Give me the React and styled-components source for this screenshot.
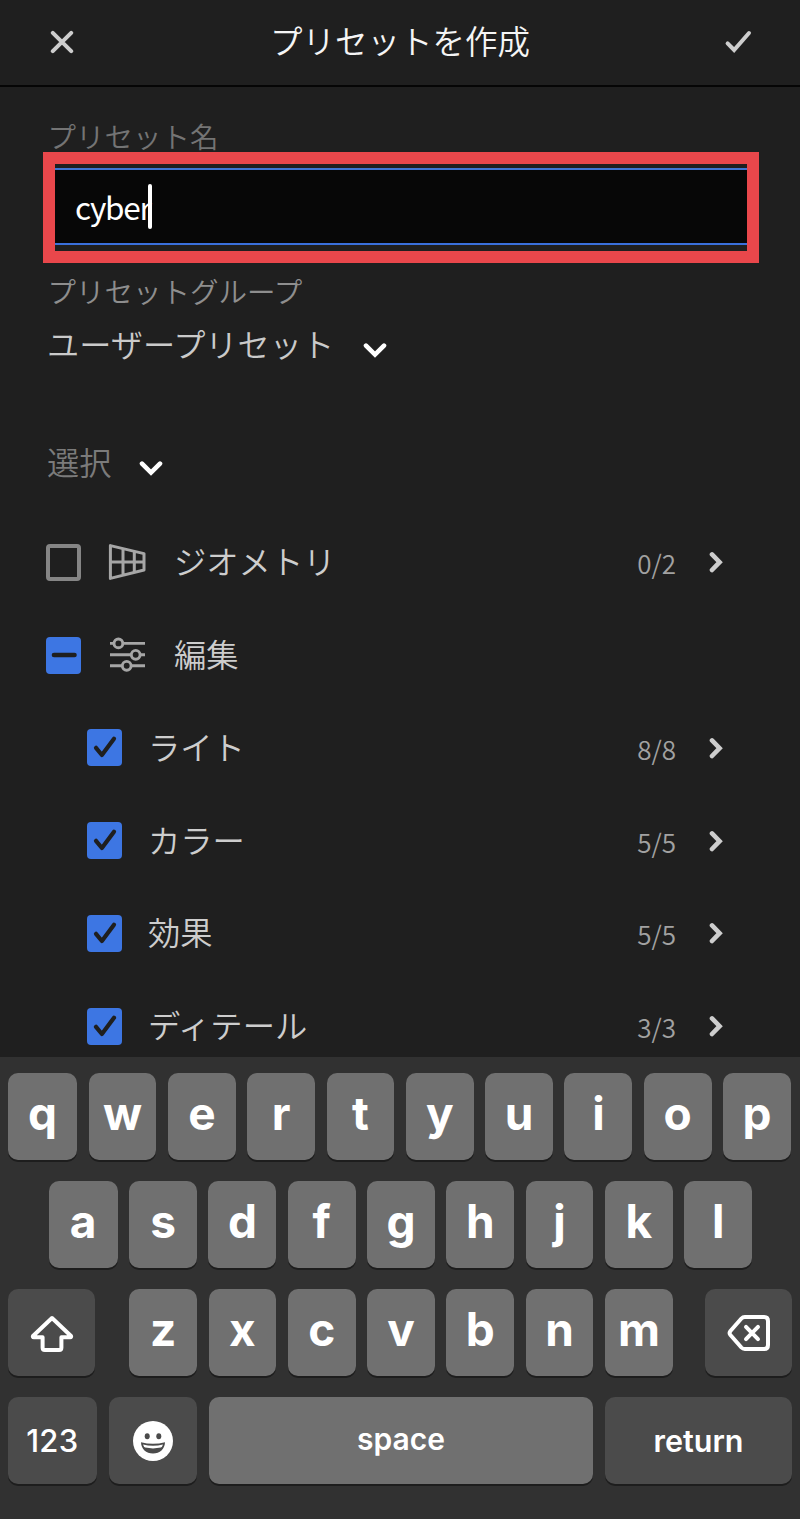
import React from "react";
import styled, { createGlobalStyle } from "styled-components";

const editItems = [
  { label: "ライト", count: "8/8" },
  { label: "カラー", count: "5/5" },
  { label: "効果", count: "5/5" },
  { label: "ディテール", count: "3/3" },
];

const CloseIcon = () => (
  <svg width="24" height="24" viewBox="0 0 24 24">
    <path
      d="M2.8 2.8L21.2 21.2M21.2 2.8L2.8 21.2"
      stroke="#cdcdcd"
      strokeWidth="4"
      strokeLinecap="round"
    />
  </svg>
);

const DoneIcon = () => (
  <svg width="28" height="24" viewBox="0 0 28 24" fill="none">
    <path
      d="M3.6 13.4L10.1 20L25 3"
      stroke="#cdcdcd"
      strokeWidth="4"
      strokeLinecap="round"
    />
  </svg>
);

const ChevronDown = () => (
  <svg width="24" height="16" viewBox="0 0 24 16" fill="none">
    <path
      d="M3 3.6L12 12.6L21 3.6"
      stroke="#fff"
      strokeWidth="4.6"
      strokeLinecap="round"
    />
  </svg>
);

const ChevronRight = () => (
  <svg width="14" height="22" viewBox="0 0 14 22" fill="none">
    <path
      d="M3 3.4L10.6 11.2L3 19"
      stroke="#cdcdcd"
      strokeWidth="4.6"
      strokeLinecap="round"
    />
  </svg>
);

const CheckMark = () => (
  <svg width="35" height="37" viewBox="0 0 35 37" fill="none">
    <path
      d="M9 18.8L14.9 26L27 9.8"
      stroke="#1f1f1f"
      strokeWidth="4.2"
      strokeLinecap="round"
      strokeLinejoin="round"
    />
  </svg>
);

const MinusMark = () => (
  <svg width="35" height="37" viewBox="0 0 35 37">
    <path
      d="M8 18H28.5"
      stroke="#1f1f1f"
      strokeWidth="4.6"
      strokeLinecap="round"
    />
  </svg>
);

const GeometryIcon = () => (
  <svg width="38" height="38" viewBox="0 0 38 38" fill="none">
    <path
      d="M2.4 2.6V35.4L36 27V10.6Z M15 5.5V32.5M26.3 8.5V29.5M2.4 19H36"
      stroke="#a6a6a6"
      strokeWidth="3"
      strokeLinejoin="round"
    />
  </svg>
);

const EditIcon = () => (
  <svg width="38" height="38" viewBox="0 0 38 38" fill="none">
    <g stroke="#a6a6a6" strokeWidth="2.9">
      <path d="M2 7.4H6M14.6 7.4H37M2 18.8H23.3M32 18.8H37M2 29.8H14.3M23 29.8H37" />
      <circle cx="10.4" cy="7.4" r="4.4" />
      <circle cx="27.7" cy="18.8" r="4.4" />
      <circle cx="18.7" cy="29.8" r="4.4" />
    </g>
  </svg>
);

const ShiftIcon = () => (
  <svg width="44" height="38" viewBox="0 0 44 38" fill="none">
    <path
      d="M22 4L3 22Q2.4 23.2 3.8 23.2H12.6V33.8Q12.6 36 14.8 36H29.2Q31.4 36 31.4 33.8V23.2H40.2Q41.6 23.2 41 22Z"
      stroke="#fff"
      strokeWidth="4"
      strokeLinejoin="round"
    />
  </svg>
);

const BackspaceIcon = () => (
  <svg width="44" height="38" viewBox="-1 0 44 38" fill="none">
    <path
      d="M17.8 3H37.2Q41 3 41 7V31Q41 35 37.2 35H17.8Q15.8 35 14.4 33.5L3.4 21Q1.8 19 3.4 17L14.4 4.5Q15.8 3 17.8 3Z"
      stroke="#fff"
      strokeWidth="4"
      strokeLinejoin="round"
    />
    <path
      d="M19 12.9L31 25.1M31 12.9L19 25.1"
      stroke="#fff"
      strokeWidth="4"
      strokeLinecap="round"
    />
  </svg>
);

const EmojiIcon = () => (
  <svg width="40" height="40" viewBox="0 0 40 40">
    <circle cx="20" cy="20" r="20" fill="#fff" />
    <ellipse cx="14.2" cy="15.3" rx="2.5" ry="3" fill="#4b4b4b" />
    <ellipse cx="25.8" cy="15.3" rx="2.5" ry="3" fill="#4b4b4b" />
    <path
      d="M8 21.2Q20 24.4 32 21.2C31.8 28 27 32.4 20 32.4S8.2 28 8 21.2Z"
      fill="#4b4b4b"
    />
    <path
      d="M10 23.4Q20 26 30 23.4Q29.2 26 27.8 26.6Q20 28.2 12.2 26.6Q10.8 26 10 23.4Z"
      fill="#fff"
    />
  </svg>
);

const App = () => {
  return (
    <>
      <GlobalStyle />
      <Screen>
        <Header>
          <CloseIcon />
          <Title>プリセットを作成</Title>
          <DoneIcon />
        </Header>
        <Content>
          <FieldLabel $color="#747474">プリセット名</FieldLabel>
          <Highlight>
            <NameField>
              cyber
              <Caret />
            </NameField>
          </Highlight>
          <FieldLabel $color="#8e8e8e" $top={13}>
            プリセットグループ
          </FieldLabel>
          <Dropdown $top={17} $gap={29} $color="#cacaca">
            ユーザープリセット
            <ChevronDown />
          </Dropdown>
          <Dropdown $top={78} $gap={28} $color="#7b7b7b">
            選択
            <ChevronDown />
          </Dropdown>
          <List>
            <Row>
              <Checkbox />
              <RowIcon>
                <GeometryIcon />
              </RowIcon>
              <RowLabel>ジオメトリ</RowLabel>
              <Count>0/2</Count>
              <ChevronRight />
            </Row>
            <Row>
              <Checkbox $on>
                <MinusMark />
              </Checkbox>
              <RowIcon>
                <EditIcon />
              </RowIcon>
              <RowLabel>編集</RowLabel>
            </Row>
            {editItems.map((item) => (
              <Row key={item.label} $nested>
                <Checkbox $on>
                  <CheckMark />
                </Checkbox>
                <RowLabel $nested>{item.label}</RowLabel>
                <Count>{item.count}</Count>
                <ChevronRight />
              </Row>
            ))}
          </List>
        </Content>
        <Keyboard>
          <KeyRow>
            {"qwertyuiop".split("").map((letter) => (
              <Key key={letter}>{letter}</Key>
            ))}
          </KeyRow>
          <KeyRow $inset={40.5}>
            {"asdfghjkl".split("").map((letter) => (
              <Key key={letter}>{letter}</Key>
            ))}
          </KeyRow>
          <KeyRow $spread>
            <Key $dark $width={87}>
              <ShiftIcon />
            </Key>
            <LetterGroup>
              {"zxcvbnm".split("").map((letter) => (
                <Key key={letter}>{letter}</Key>
              ))}
            </LetterGroup>
            <Key $dark $width={87}>
              <BackspaceIcon />
            </Key>
          </KeyRow>
          <KeyRow $spread>
            <Key $dark $width={88.6}>
              <KeyText $size={31} $weight={500} $spacing={0.3}>
                123
              </KeyText>
            </Key>
            <Key $dark $width={88.6}>
              <EmojiIcon />
            </Key>
            <Key $width={384}>
              <KeyText $size={30} $lift={3}>
                space
              </KeyText>
            </Key>
            <Key $dark $width={187}>
              <KeyText $size={30.5}>return</KeyText>
            </Key>
          </KeyRow>
        </Keyboard>
      </Screen>
    </>
  );
};

const GlobalStyle = createGlobalStyle`
  * {
    box-sizing: border-box;
  }
  body {
    margin: 0;
    background: #1f1f1f;
  }
  svg {
    display: block;
    flex-shrink: 0;
  }
`;

const Screen = styled.div`
  display: flex;
  flex-direction: column;
  width: 800px;
  height: 1519px;
  overflow: hidden;
  background: #1f1f1f;
  font-family: "Noto Sans CJK JP", sans-serif;
  font-weight: 350;
`;

const Header = styled.header`
  display: flex;
  align-items: center;
  justify-content: space-between;
  flex-shrink: 0;
  height: 87px;
  padding: 0 48px 2px 50px;
  border-bottom: 2px solid #050505;
`;

const Title = styled.h1`
  margin: 0 0 3px 2px;
  font-size: 32.5px;
  font-weight: 350;
  line-height: 40px;
  color: #f5f5f5;
`;

const Content = styled.main`
  display: flex;
  flex-direction: column;
  height: 970px;
  flex-shrink: 0;
  padding: 34px 77px 0 46px;
  overflow: hidden;
`;

const FieldLabel = styled.div`
  margin-top: ${(props) => props.$top || 0}px;
  padding-left: 1.5px;
  font-size: 28.5px;
  line-height: 30px;
  color: ${(props) => props.$color};
`;

const Highlight = styled.div`
  width: 716px;
  height: 111px;
  margin: 1px 0 0 -3px;
  padding: 4px 0 6px;
  border: 12px solid #e9474b;
  background: #1f1f1f;
  flex-shrink: 0;
`;

const NameField = styled.div`
  display: flex;
  align-items: center;
  height: 77px;
  padding: 0 0 1px 20px;
  border-top: 2px solid #3f74d2;
  border-bottom: 2px solid #3a70dc;
  background: #070707;
  font-size: 31.5px;
  font-weight: 400;
  line-height: 44px;
  letter-spacing: -1.3px;
  color: #fff;
`;

const Caret = styled.span`
  width: 4px;
  height: 45px;
  margin-left: -2px;
  border-radius: 2px;
  background: #fff;
`;

const Dropdown = styled.div`
  display: flex;
  align-items: center;
  gap: ${(props) => props.$gap}px;
  height: 40px;
  margin-top: ${(props) => props.$top}px;
  padding-left: 1px;
  font-size: 32.2px;
  line-height: 40px;
  color: ${(props) => props.$color};

  svg {
    margin-top: 14px;
  }
`;

const List = styled.div`
  display: flex;
  flex-direction: column;
  margin-top: 35px;
`;

const Row = styled.div`
  display: flex;
  align-items: center;
  flex-shrink: 0;
  height: 92.75px;
  padding-left: ${(props) => (props.$nested ? 41 : 0)}px;
`;

const Checkbox = styled.div`
  width: 35px;
  height: 37px;
  border: ${(props) => (props.$on ? "none" : "4px solid #858585")};
  border-radius: 4px;
  background: ${(props) => (props.$on ? "#3d76e3" : "transparent")};
`;

const RowIcon = styled.div`
  margin-left: 27px;
`;

const RowLabel = styled.div`
  flex: 1;
  margin: 0 0 4px ${(props) => (props.$nested ? 26 : 28)}px;
  font-size: 32.3px;
  line-height: 40px;
  color: #cdcdcd;
`;

const Count = styled.div`
  margin: 2px 33px 0 0;
  font-size: 26px;
  line-height: 32px;
  color: #a2a2a2;
`;

const Keyboard = styled.div`
  display: flex;
  flex-direction: column;
  flex: 1;
  gap: 21px;
  padding: 16px 8px 0;
  background: #313131;
  font-family: Inter, sans-serif;
`;

const Key = styled.div`
  display: flex;
  align-items: center;
  justify-content: center;
  flex-shrink: 0;
  width: ${(props) => props.$width || 67.8}px;
  height: 87px;
  border-radius: 10px;
  background: ${(props) => (props.$dark ? "#4b4b4b" : "#707070")};
  box-shadow: 0 2px 0 #1d1d1d;
  padding-bottom: ${(props) => (props.$width ? 0 : 8)}px;
  font-size: 46px;
  font-weight: 700;
  line-height: 56px;
  color: #fff;
`;

const KeyRow = styled.div`
  display: flex;
  justify-content: ${(props) => (props.$spread ? "space-between" : "flex-start")};
  gap: ${(props) => (props.$spread ? 0 : 11.5)}px;
  padding-left: ${(props) => props.$inset || 0}px;

  /* the edge key of a letter row is a touch wider */
  ${Key}:first-child {
    ${(props) => !props.$spread && "width: 69.2px;"}
  }
`;

const LetterGroup = styled.div`
  display: flex;
  gap: 11.5px;
  margin-left: 2px;
`;

const KeyText = styled.span`
  font-size: ${(props) => props.$size}px;
  font-weight: ${(props) => props.$weight || 600};
  line-height: 40px;
  letter-spacing: ${(props) => props.$spacing || 0}px;
  margin-bottom: ${(props) => props.$lift || 0}px;
`;

export default App;
